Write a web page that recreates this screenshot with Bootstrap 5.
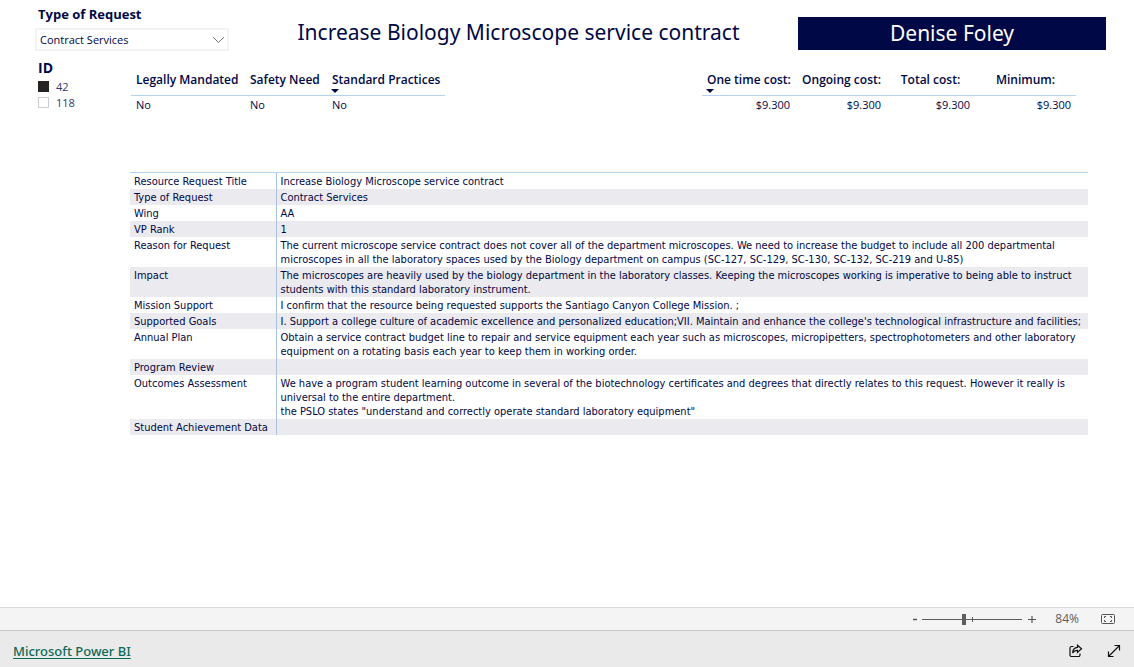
<!DOCTYPE html>
<html lang="en">
<head>
<meta charset="utf-8">
<meta name="viewport" content="width=device-width, initial-scale=1">
<title>Resource Request</title>
<link href="https://cdn.jsdelivr.net/npm/bootstrap@5.3.0/dist/css/bootstrap.min.css" rel="stylesheet">
<style>
  :root { --ink: #000845; --rule: #b3d3ee; --band: #eaeaef; }
  body { font-family: "Open Sans", "Noto Sans", sans-serif; font-size: 11px; line-height: 14px; color: var(--ink); }
  .report { padding: 6px 28px 24px 35px; }
  .filter-box { width: 194px; }
  .filter-title { font-size: 13px; line-height: 16px; font-weight: 700; margin: 0 0 0 3px; }
  .filter-box .form-select {
    height: 23px; margin-top: 6px; padding: 1px 24px 0 3px; border: 2px solid #f3f3f3; border-radius: 0;
    font-size: 11px; line-height: 18px; color: var(--ink);
    background-size: 13px 13px; background-position: right 2px center;
    background-image: url("data:image/svg+xml,%3Csvg xmlns='http://www.w3.org/2000/svg' viewBox='0 0 13 13'%3E%3Cpath d='M1 4l5.500 5.500L12 4' fill='none' stroke='%23777' stroke-width='1'/%3E%3C/svg%3E");
  }
  .request-title, .owner { font-family: "Noto Sans", sans-serif; font-size: 21px; font-weight: 400; }
  .request-title { line-height: 30px; padding: 11px 0 0 10px; }
  .owner { width: 308px; height: 33px; margin-top: 11px; background: #000845; color: #fff; line-height: 33px; }
  .id-list { width: 96px; }
  .id-list .filter-title { font-size: 14px; padding: 1px 0 2px; }
  .id-list .form-check { min-height: 16px; padding-left: 21px; margin: 0 0 0 3px; }
  .id-list .form-check-input { width: 11px; height: 11px; margin: 3px 0 0 -21px; border: 1px solid #ccc; border-radius: 0; }
  .id-list .form-check-input:checked { background: #252423; border-color: #252423; }
  .id-list .form-check-label { line-height: 17px; height: 16px; display: block; margin-left: -3px; color: #33396a; }
  .summary { margin: 13px 0 0; }
  .summary th { position: relative; font-size: 12px; line-height: 16px; font-weight: 600; padding: 0 5px 7px; border-bottom: 1px solid var(--rule); white-space: nowrap; }
  .summary td { padding: 1px 5px; line-height: 16px; }
  .sorted::after { content: ""; position: absolute; left: 4px; bottom: 2px; border: 4px solid transparent; border-top-color: var(--ink); border-bottom: 0; }
  .costs { margin-right: 30px; table-layout: fixed; width: 374px; }
  .flags { table-layout: fixed; width: 314px; }
  .details { margin: 58px 18px 0 95px; border-top: 1px solid var(--rule); font-family: "DejaVu Sans Condensed", "DejaVu Sans", sans-serif; }
  .details table { width: 100%; }
  .details th { width: 146px; font-weight: 400; border-right: 1px solid #a9c1e4; white-space: nowrap; }
  .details th, .details td { padding: 2px 4px 0; vertical-align: top; height: 16px; }
  .details tr:nth-child(even) { background: var(--band); }
  .zoom-bar { height: 23px; padding-right: 18px; background: #f4f4f4; border-top: 1px solid #dadada; color: #605e5c; font-size: 12px; }
  .zoom-bar .btn, .embed-bar .btn { --bs-btn-padding-x: 0; --bs-btn-padding-y: 0; line-height: 16px; border: 0; border-radius: 0; color: #444; display: flex; }
  .zoom-range { appearance: none; width: 100px; height: 13px; margin: 0; background: linear-gradient(#605e5c, #605e5c) 0 6px / 100% 1px no-repeat, linear-gradient(#605e5c, #605e5c) 50px 4px / 1px 5px no-repeat; }
  .zoom-range::-webkit-slider-thumb { appearance: none; width: 4px; height: 11px; background: #605e5c; }
  .zoom-value { margin-left: 17px; margin-right: 22px; }
  .embed-bar { height: 37px; padding: 3px 13px 0; background: #eaeaea; border-top: 1px solid #c8c8c8; }
  .embed-bar a { font-family: "Noto Sans", sans-serif; font-size: 13px; line-height: 20px; font-weight: 500; color: #0b6a58; text-underline-offset: 2px; }
</style>
</head>
<body class="d-flex flex-column min-vh-100">
<main class="report flex-grow-1">
  <header class="d-flex align-items-start">
    <div class="filter-box flex-shrink-0">
      <label class="filter-title d-block" for="type">Type of Request</label>
      <select class="form-select" id="type"><option>Contract Services</option></select>
    </div>
    <h1 class="request-title flex-grow-1 text-center mb-0">Increase Biology Microscope service contract</h1>
    <div class="owner flex-shrink-0 text-center">Denise Foley</div>
  </header>
  <section class="d-flex align-items-start pt-2">
    <fieldset class="id-list flex-shrink-0">
      <legend class="filter-title">ID</legend>
      <div class="form-check"><input class="form-check-input" type="checkbox" id="id42" checked><label class="form-check-label" for="id42">42</label></div>
      <div class="form-check"><input class="form-check-input" type="checkbox" id="id118"><label class="form-check-label" for="id118">118</label></div>
    </fieldset>
    <table class="summary flags">
      <colgroup><col style="width:114px"><col style="width:82px"><col></colgroup>
      <thead><tr><th>Legally Mandated</th><th>Safety Need</th><th class="sorted">Standard Practices</th></tr></thead>
      <tbody><tr><td>No</td><td>No</td><td>No</td></tr></tbody>
    </table>
    <table class="summary costs ms-auto text-end">
      <colgroup><col style="width:93px"><col style="width:91px"><col style="width:89px"><col></colgroup>
      <thead><tr><th class="sorted">One time cost:</th><th>Ongoing cost:</th><th class="text-center">Total cost:</th><th class="text-center">Minimum:</th></tr></thead>
      <tbody><tr><td>$9.300</td><td>$9.300</td><td>$9.300</td><td>$9.300</td></tr></tbody>
    </table>
  </section>
  <section class="details">
    <table>
      <tbody>
        <tr><th scope="row">Resource Request Title</th><td>Increase Biology Microscope service contract</td></tr>
        <tr><th scope="row">Type of Request</th><td>Contract Services</td></tr>
        <tr><th scope="row">Wing</th><td>AA</td></tr>
        <tr><th scope="row">VP Rank</th><td>1</td></tr>
        <tr><th scope="row">Reason for Request</th><td>The current microscope service contract does not cover all of the department microscopes. We need to increase the budget to include all 200 departmental microscopes in all the laboratory spaces used by the Biology department on campus (SC-127, SC-129, SC-130, SC-132, SC-219 and U-85)</td></tr>
        <tr><th scope="row">Impact</th><td>The microscopes are heavily used by the biology department in the laboratory classes. Keeping the microscopes working is imperative to being able to instruct students with this standard laboratory instrument.</td></tr>
        <tr><th scope="row">Mission Support</th><td>I confirm that the resource being requested supports the Santiago Canyon College Mission. ;</td></tr>
        <tr><th scope="row">Supported Goals</th><td>I. Support a college culture of academic excellence and personalized education;VII. Maintain and enhance the college's technological infrastructure and facilities;</td></tr>
        <tr><th scope="row">Annual Plan</th><td>Obtain a service contract budget line to repair and service equipment each year such as microscopes, micropipetters, spectrophotometers and other laboratory equipment on a rotating basis each year to keep them in working order.</td></tr>
        <tr><th scope="row">Program Review</th><td></td></tr>
        <tr><th scope="row">Outcomes Assessment</th><td>We have a program student learning outcome in several of the biotechnology certificates and degrees that directly relates to this request. However it really is universal to the entire department.<br>the PSLO states "understand and correctly operate standard laboratory equipment"</td></tr>
        <tr><th scope="row">Student Achievement Data</th><td></td></tr>
      </tbody>
    </table>
  </section>
</main>
<div class="zoom-bar d-flex align-items-center justify-content-end">
  <button class="btn me-1" type="button" aria-label="Zoom out"><svg width="6" height="12"><path d="M1 6.500h4" stroke="#555" stroke-width="1.500"/></svg></button>
  <input class="zoom-range" type="range" min="0" max="100" value="41" aria-label="Zoom">
  <button class="btn ms-1" type="button" aria-label="Zoom in"><svg width="12" height="12"><path d="M2 6.500h8M6 3v7" stroke="#555" stroke-width="1.200"/></svg></button>
  <span class="zoom-value">84%</span>
  <button class="btn" type="button" aria-label="Fit to page"><svg width="15" height="12" fill="none" stroke="#555"><rect x=".5" y="1.500" width="13" height="9" rx="1"/><path d="M5 3.500H3.500V5M9 3.500h1.500V5M5 8.500H3.500V7M9 8.500h1.500V7"/></svg></button>
</div>
<footer class="embed-bar d-flex align-items-center">
  <a href="#">Microsoft Power BI</a>
  <button class="btn ms-auto" type="button" aria-label="Share"><svg width="14" height="14" fill="none" stroke="#111" stroke-width="1.200"><path d="M4.500 2.500H2.500a1.500 1.500 0 0 0-1.500 1.500v7a1.500 1.500 0 0 0 1.500 1.500h7a1.500 1.500 0 0 0 1.500-1.500V9.500"/><path d="M8.500 1.200l4 3.600-4 3.600V6.300C6.200 6.300 4.800 7 3.600 9 3.800 5.700 5.500 3.600 8.500 3.400z"/></svg></button>
  <button class="btn ms-4" type="button" aria-label="Full screen"><svg width="14" height="14" fill="none" stroke="#111" stroke-width="1.200"><path d="M1.500 12.500l11-11M7.500 1.500h5v5M1.500 7.500v5h5"/></svg></button>
</footer>
<script src="https://cdn.jsdelivr.net/npm/bootstrap@5.3.0/dist/js/bootstrap.bundle.min.js"></script>
</body>
</html>
